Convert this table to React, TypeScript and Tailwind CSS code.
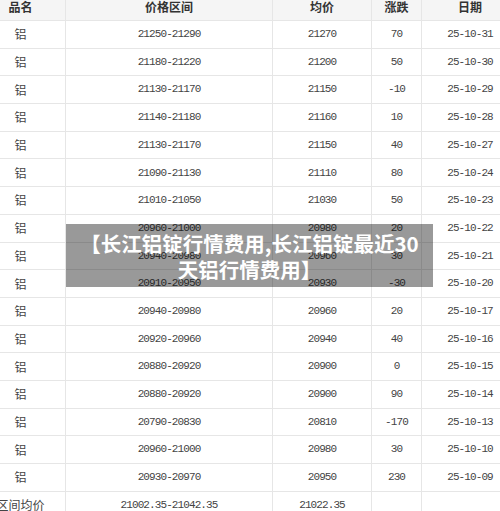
const rows = [
  ["21250-21290", "21270", "70", "25-10-31"],
  ["21180-21220", "21200", "50", "25-10-30"],
  ["21130-21170", "21150", "-10", "25-10-29"],
  ["21140-21180", "21160", "10", "25-10-28"],
  ["21130-21170", "21150", "40", "25-10-27"],
  ["21090-21130", "21110", "80", "25-10-24"],
  ["21010-21050", "21030", "50", "25-10-23"],
  ["20960-21000", "20980", "20", "25-10-22"],
  ["20940-20980", "20960", "30", "25-10-21"],
  ["20910-20950", "20930", "-30", "25-10-20"],
  ["20940-20980", "20960", "20", "25-10-17"],
  ["20920-20960", "20940", "40", "25-10-16"],
  ["20880-20920", "20900", "0", "25-10-15"],
  ["20880-20920", "20900", "90", "25-10-14"],
  ["20790-20830", "20810", "-170", "25-10-13"],
  ["20960-21000", "20980", "30", "25-10-10"],
  ["20930-20970", "20950", "230", "25-10-09"],
];

const cjk = "font-['Noto_Sans_CJK_SC',sans-serif]";
const num = "font-['Liberation_Mono',monospace] text-[11px] tracking-[-0.9px]";

function Row({ cells, head }: { cells: React.ReactNode[]; head?: boolean }) {
  const widths = ["w-[90px]", "w-[207px]", "w-[99px]", "w-[50px]", "w-[96px]"];
  return (
    <div
      className={`flex h-[27.7px] shrink-0 border-b border-[#e6e6e6] ${head ? "h-[28px] bg-[#f5f5f5]" : "bg-white"}`}
    >
      {cells.map((c, i) => (
        <div
          key={i}
          className={`flex shrink-0 items-center justify-center ${widths[i]} ${i < 4 ? "border-r border-[#e6e6e6]" : ""}`}
        >
          {c}
        </div>
      ))}
    </div>
  );
}

export default function App() {
  const head = ["品名", "价格区间", "均价", "涨跌", "日期"].map((t) => (
    <span className={`${cjk} text-[12px] font-bold text-[#333]`}>{t}</span>
  ));
  return (
    <div className="relative h-[511px] w-[500px] overflow-hidden bg-white text-[#333]">
      <div className="-ml-[24px] -mt-[7px] flex flex-col">
        <Row head cells={head} />
        {rows.map((r, i) => (
          <Row
            key={i}
            cells={[
              <span className={`${cjk} text-[12px] text-[#444]`}>铝</span>,
              ...r.map((v) => <span className={`${num} text-[#444]`}>{v}</span>),
            ]}
          />
        ))}
        <Row
          cells={[
            <span className={`${cjk} text-[12px] text-[#444]`}>区间均价</span>,
            <span className={`${num} text-[#444]`}>21002.35-21042.35</span>,
            <span className={`${num} text-[#444]`}>21022.35</span>,
            "",
            "",
          ]}
        />
      </div>

      {/* title overlay */}
      <div className="absolute left-[66px] top-[224px] flex h-[63px] w-[367px] items-center justify-center bg-black/40">
        <p
          className={`${cjk} text-center text-[20.5px] font-bold leading-[26px] text-white`}
        >
          【长江铝锭行情费用,长江铝锭最近30
          <br />
          天铝行情费用】
        </p>
      </div>
    </div>
  );
}
